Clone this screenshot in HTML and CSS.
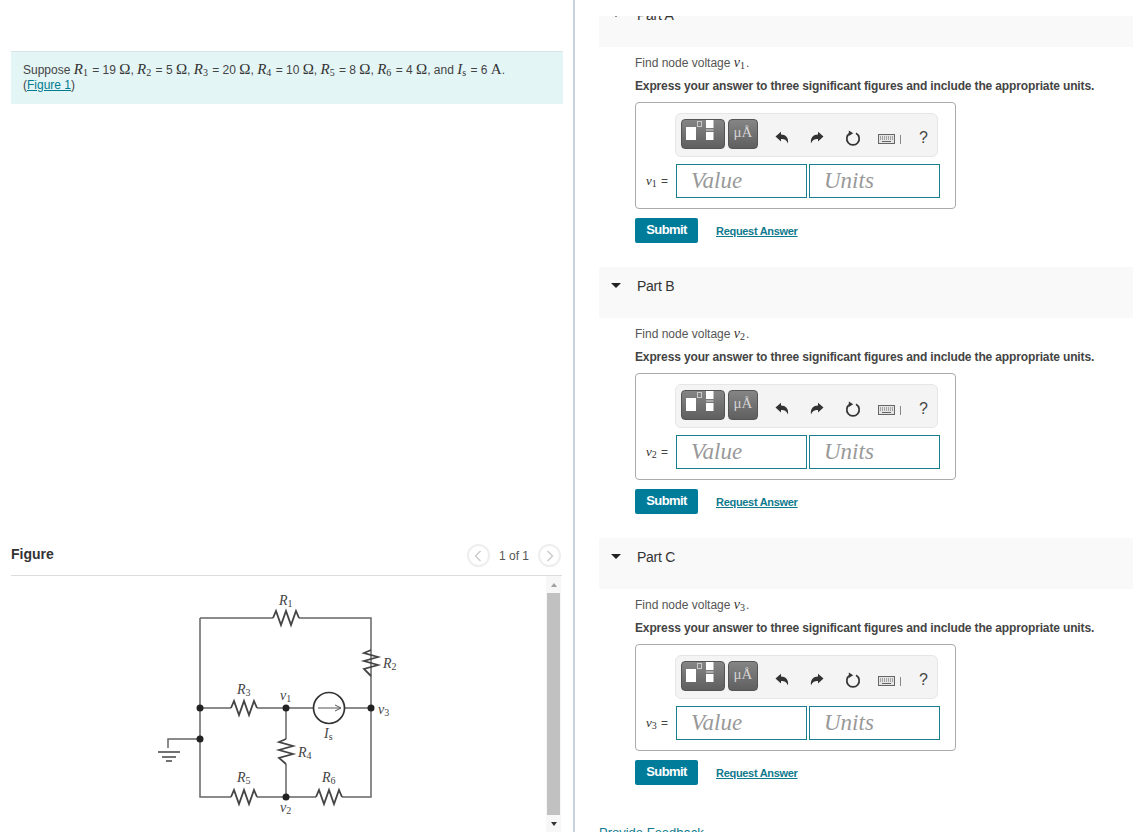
FILE: index.html
```html
<!DOCTYPE html>
<html lang="en">
<head>
<meta charset="utf-8">
<title>Node voltages</title>
<link rel="stylesheet" href="styles.css">
</head>
<body>
<svg class="defs" width="0" height="0" aria-hidden="true">
  <symbol id="i-tpl" viewBox="0 0 44 30">
    <rect x="5" y="8" width="10" height="13" fill="#fff"/>
    <rect x="16.500" y="2.500" width="4" height="5" fill="none" stroke="#c9c9c9"/>
    <rect x="25" y="1" width="7.500" height="8" fill="#fff"/>
    <rect x="25" y="10.500" width="7.500" height="1" fill="#ddd"/>
    <rect x="25" y="13" width="7.500" height="8" fill="#fff"/>
  </symbol>
  <symbol id="i-undo" viewBox="0 0 14 14">
    <path d="M0.500 5.500 L6 0.800 V3.600 C10.500 3.600 13.800 6.300 13 12.600 C11.800 9.200 9.800 8 6 8 V10.500 Z" fill="#333"/>
  </symbol>
  <symbol id="i-redo" viewBox="0 0 14 14">
    <path d="M13.500 5.500 L8 0.800 V3.600 C3.500 3.600 0.200 6.300 1 12.600 C2.200 9.200 4.200 8 8 8 V10.500 Z" fill="#333"/>
  </symbol>
  <symbol id="i-reset" viewBox="0 0 16 16">
    <path d="M5 3.300 A6.200 6.200 0 1 0 11 3.300" fill="none" stroke="#333" stroke-width="1.700"/>
    <path d="M3.800 0.500 L8.200 3.300 L3.800 6 Z" fill="#333"/>
  </symbol>
  <symbol id="i-keys" viewBox="0 0 17 10">
    <rect x="0.500" y="0.500" width="16" height="9" fill="#e4e4e4" stroke="#666"/>
    <path d="M2 3 H15 M2 5 H15" stroke="#666" stroke-dasharray="1 1"/>
    <path d="M4 7.500 H13" stroke="#666"/>
  </symbol>
</svg>
<main class="page">
  <section class="left">
    <div class="intro">
      Suppose <i class="m">R<sub>1</sub></i> = 19 <span class="u">Ω</span>, <i class="m">R<sub>2</sub></i> = 5 <span class="u">Ω</span>, <i class="m">R<sub>3</sub></i> = 20 <span class="u">Ω</span>, <i class="m">R<sub>4</sub></i> = 10 <span class="u">Ω</span>, <i class="m">R<sub>5</sub></i> = 8 <span class="u">Ω</span>, <i class="m">R<sub>6</sub></i> = 4 <span class="u">Ω</span>, and <i class="m">I<sub>s</sub></i> = 6 <span class="u">A</span>.<br>
      (<a href="#" class="link">Figure 1</a>)
    </div>
    <div class="figure">
      <header class="fig-head">
        <h2 class="fig-title">Figure</h2>
        <div class="pager">
          <span class="page-btn"><svg width="8" height="12" viewBox="0 0 8 12"><path d="M6.500 1 L1.500 6 L6.500 11" fill="none" stroke="#ccc" stroke-width="1.500"/></svg></span>
          <span class="page-num">1 of 1</span>
          <span class="page-btn"><svg width="8" height="12" viewBox="0 0 8 12"><path d="M1.500 1 L6.500 6 L1.500 11" fill="none" stroke="#ccc" stroke-width="1.500"/></svg></span>
        </div>
      </header>
      <div class="fig-body">
        <div class="fig-canvas">
          <svg class="circuit" width="280" height="252" viewBox="0 0 280 252">
            <g fill="none" stroke="#666" stroke-width="1.500">
              <path d="M60 38 V217 H91 M117 217 H176 M202 217 H231 V38 H159 M60 38 H133 M60 128 H91 M117 128 H174 M204 128 H231 M146 128 V159 M146 184 V217 M60 159 H28 V168"/>
            </g>
            <path d="M18 172 H40 M22 177 H36 M26 181 H32" fill="none" stroke="#444" stroke-width="1.500"/>
            <g fill="none" stroke="#444" stroke-width="1.800">
              <path d="M133 38 L136 31 L141 45 L146 31 L151 45 L156 31 L159 38"/>
              <path d="M231 70 L224 73 L238 77 L224 81 L238 85 L224 89 L231 96"/>
              <path d="M91 128 L94 121 L99 135 L104 121 L109 135 L114 121 L117 128"/>
              <path d="M146 159 L139 162 L153 166 L139 170 L153 174 L139 178 L146 184"/>
              <path d="M91 217 L94 210 L99 224 L104 210 L109 224 L114 210 L117 217"/>
              <path d="M176 217 L179 210 L184 224 L189 210 L194 224 L199 210 L202 217"/>
              <circle cx="189" cy="128" r="15.500" stroke="#333" stroke-width="1.700" fill="#fff"/>
            </g>
            <path d="M178 128 H200 M195 125 L201 128 L195 131" fill="none" stroke="#555"/>
            <g fill="#222">
              <circle cx="60" cy="128" r="3.500"/><circle cx="60" cy="159" r="3.500"/>
              <circle cx="146" cy="128" r="3.500"/><circle cx="231" cy="128" r="3.500"/>
              <circle cx="146" cy="217" r="3.500"/>
            </g>
            <g class="c-label">
              <text x="139" y="25">R<tspan class="c-sub" dy="2">1</tspan></text>
              <text x="243" y="88">R<tspan class="c-sub" dy="2">2</tspan></text>
              <text x="97" y="114">R<tspan class="c-sub" dy="2">3</tspan></text>
              <text x="158" y="177">R<tspan class="c-sub" dy="2">4</tspan></text>
              <text x="97" y="202">R<tspan class="c-sub" dy="2">5</tspan></text>
              <text x="182" y="202">R<tspan class="c-sub" dy="2">6</tspan></text>
              <text x="184" y="158">I<tspan class="c-sub" dy="2">s</tspan></text>
              <text x="140" y="120">v<tspan class="c-sub" dy="2">1</tspan></text>
              <text x="238" y="134">v<tspan class="c-sub" dy="2">3</tspan></text>
              <text x="140" y="232">v<tspan class="c-sub" dy="2">2</tspan></text>
            </g>
          </svg>
        </div>
        <div class="scrollbar">
          <span class="arrow-up"></span>
          <span class="thumb"></span>
          <span class="arrow-down"></span>
        </div>
      </div>
    </div>
  </section>
  <section class="right">
    <div class="clip">
      <div class="parts">
        <article class="part">
          <header class="part-head"><span class="caret"></span>Part A</header>
          <p class="q">Find node voltage <i class="m">v<sub>1</sub></i>.</p>
          <p class="hint">Express your answer to three significant figures and include the appropriate units.</p>
          <div class="answer">
            <div class="toolbar">
              <span class="tb tb-wide"><svg width="44" height="30"><use href="#i-tpl"/></svg></span>
              <span class="tb tb-unit">μÅ</span>
              <svg class="ic ic-undo" width="14" height="14"><use href="#i-undo"/></svg>
              <svg class="ic ic-redo" width="14" height="14"><use href="#i-redo"/></svg>
              <svg class="ic ic-reset" width="16" height="16"><use href="#i-reset"/></svg>
              <svg class="ic ic-keys" width="17" height="10"><use href="#i-keys"/></svg>
              <span class="tb-sep"></span>
              <span class="tb-help">?</span>
            </div>
            <div class="inputs">
              <span class="var"><i class="m">v<sub>1</sub></i> =</span>
              <span class="field">Value</span>
              <span class="field">Units</span>
            </div>
          </div>
          <div class="actions"><button class="submit">Submit</button><a href="#" class="request">Request Answer</a></div>
        </article>
        <article class="part">
          <header class="part-head"><span class="caret"></span>Part B</header>
          <p class="q">Find node voltage <i class="m">v<sub>2</sub></i>.</p>
          <p class="hint">Express your answer to three significant figures and include the appropriate units.</p>
          <div class="answer">
            <div class="toolbar">
              <span class="tb tb-wide"><svg width="44" height="30"><use href="#i-tpl"/></svg></span>
              <span class="tb tb-unit">μÅ</span>
              <svg class="ic ic-undo" width="14" height="14"><use href="#i-undo"/></svg>
              <svg class="ic ic-redo" width="14" height="14"><use href="#i-redo"/></svg>
              <svg class="ic ic-reset" width="16" height="16"><use href="#i-reset"/></svg>
              <svg class="ic ic-keys" width="17" height="10"><use href="#i-keys"/></svg>
              <span class="tb-sep"></span>
              <span class="tb-help">?</span>
            </div>
            <div class="inputs">
              <span class="var"><i class="m">v<sub>2</sub></i> =</span>
              <span class="field">Value</span>
              <span class="field">Units</span>
            </div>
          </div>
          <div class="actions"><button class="submit">Submit</button><a href="#" class="request">Request Answer</a></div>
        </article>
        <article class="part">
          <header class="part-head"><span class="caret"></span>Part C</header>
          <p class="q">Find node voltage <i class="m">v<sub>3</sub></i>.</p>
          <p class="hint">Express your answer to three significant figures and include the appropriate units.</p>
          <div class="answer">
            <div class="toolbar">
              <span class="tb tb-wide"><svg width="44" height="30"><use href="#i-tpl"/></svg></span>
              <span class="tb tb-unit">μÅ</span>
              <svg class="ic ic-undo" width="14" height="14"><use href="#i-undo"/></svg>
              <svg class="ic ic-redo" width="14" height="14"><use href="#i-redo"/></svg>
              <svg class="ic ic-reset" width="16" height="16"><use href="#i-reset"/></svg>
              <svg class="ic ic-keys" width="17" height="10"><use href="#i-keys"/></svg>
              <span class="tb-sep"></span>
              <span class="tb-help">?</span>
            </div>
            <div class="inputs">
              <span class="var"><i class="m">v<sub>3</sub></i> =</span>
              <span class="field">Value</span>
              <span class="field">Units</span>
            </div>
          </div>
          <div class="actions"><button class="submit">Submit</button><a href="#" class="request">Request Answer</a></div>
        </article>
        <a href="#" class="feedback">Provide Feedback</a>
      </div>
    </div>
  </section>
</main>
</body>
</html>
```
FILE: styles.css
```css
* { box-sizing: border-box; }
html, body { margin: 0; padding: 0; background: #fff; }
body { font: 12px/14px "Liberation Sans", Arial, sans-serif; color: #333; overflow: hidden; }
.defs { position: absolute; }
.page { display: flex; width: 1133px; height: 832px; overflow: hidden; }

.left {
  width: 575px; height: 832px; flex: none;
  padding: 51px 10px 0 11px;
  border-right: 2px solid #c9d3df;
  display: flex; flex-direction: column;
}
.intro {
  height: 53px; padding: 10px 12px 0;
  background: #e4f5f6; border-top: 1px solid #d8e4e8;
  color: #444; line-height: 15px;
}
.m { font-family: "Liberation Serif", serif; font-style: italic; font-size: 15px; line-height: 1; color: #333; margin-right: 1px; }
.m sub { font-style: normal; font-size: 10px; line-height: 0; vertical-align: -2px; }
.u { font-family: "Liberation Serif", serif; font-size: 15px; line-height: 1; color: #333; }
.link { color: #007c91; text-decoration: underline; }

.figure { margin-top: auto; height: 293px; margin-right: 1px; display: flex; flex-direction: column; }
.fig-head {
  flex: none; height: 37px;
  display: flex; align-items: center; justify-content: space-between;
  border-bottom: 1px solid #ddd;
  padding-bottom: 6px;
}
.fig-title { margin: 0; font-size: 14px; font-weight: bold; color: #333; }
.pager { display: flex; align-items: center; gap: 9px; padding-top: 3px; margin-right: 1px; }
.page-btn {
  width: 23px; height: 23px; border: 2px solid #eee; border-radius: 50%;
  display: flex; align-items: center; justify-content: center;
}
.page-num { color: #555; }
.fig-body { flex: 1; display: flex; min-height: 0; }
.fig-canvas { flex: 1; padding: 4px 0 0 129px; overflow: hidden; }
.circuit { display: block; }
.c-label { font: italic 14px "Liberation Serif", serif; fill: #444; }
.c-sub { font-size: 10px; font-style: normal; }
.scrollbar {
  width: 15px; flex: none; margin-right: 1px; background: #f7f7f7;
  display: flex; flex-direction: column; align-items: center;
}
.thumb { width: 13px; height: 222px; background: #c1c1c1; }
.arrow-up, .arrow-down { width: 0; height: 0; border-left: 3.5px solid transparent; border-right: 3.5px solid transparent; }
.arrow-up { border-bottom: 4px solid #a0a0a0; margin: 7px 0 6px; }
.arrow-down { border-top: 4px solid #333; margin-top: 7px; }

.right { flex: 1; min-width: 0; height: 832px; padding: 16px 0 0 24px; }
.clip { height: 816px; overflow: hidden; }
.parts { margin-top: -20px; }
.part { height: 271px; }
.part-head {
  height: 51px; background: #f9f9f9;
  display: flex; align-items: center;
  padding: 0 0 14px 12px;
  font-size: 14px; letter-spacing: -0.25px; color: #333;
}
.caret {
  width: 0; height: 0; margin-right: 16px;
  border-left: 5px solid transparent; border-right: 5px solid transparent;
  border-top: 5px solid #222;
}
.q, .hint { margin: 0 0 0 36px; height: 23px; line-height: 14px; }
.q { margin-top: 9px; color: #555; }
.hint { height: 16px; font-weight: bold; color: #444; letter-spacing: -0.14px; }
.q .m { font-size: 14px; }
.answer {
  width: 321px; height: 107px; margin: 7px 0 0 36px;
  border: 1px solid #aaa; border-radius: 4px;
  padding: 10px 0 0 10px;
}
.toolbar {
  width: 263px; height: 44px; margin-left: 29px;
  background: #f4f4f4; border: 1px solid #e6e6e6; border-radius: 6px;
  display: flex; align-items: center; padding-left: 5px;
}
.tb {
  height: 30px; margin-top: -3px; border-radius: 4px; border: 1px solid #555;
  background: linear-gradient(#858585, #5f5f5f);
  display: flex; align-items: center; justify-content: center;
}
.tb-wide { width: 44px; }
.tb-wide svg { display: block; flex: none; }
.tb-unit { width: 30px; margin-left: 3px; color: #d4d4d4; font: 15px "Liberation Serif", serif; padding-bottom: 3px; }
.ic { flex: none; display: block; }
.ic-undo { margin: 5px 0 0 17px; }
.ic-redo { margin: 5px 0 0 21px; }
.ic-reset { margin: 6px 0 0 21px; }
.ic-keys { margin: 8px 0 0 17px; }
.tb-sep { width: 1px; height: 9px; background: #888; margin: 8px 0 0 5px; }
.tb-help { margin: 5px 0 0 18px; font-size: 16px; color: #444; }
.inputs { display: flex; align-items: center; margin-top: 7px; }
.var { width: 30px; color: #444; white-space: nowrap; }
.var .m { font-size: 13px; }
.field {
  width: 131px; height: 34px; margin-right: 2px;
  border: 1px solid #1a7d90; background: #fff;
  padding-left: 14px;
  font: italic 23px/32px "Liberation Serif", serif; color: #999;
}
.actions { display: flex; align-items: center; margin: 9px 0 0 36px; }
.submit {
  width: 63px; height: 25px; padding: 0 0 2px; border: 0; border-radius: 2px;
  background: #007c9b; color: #fff;
  font: bold 13px "Liberation Sans", Arial, sans-serif; letter-spacing: -0.6px;
}
.request { margin: 0 0 0 18px; color: #0f7a8e; font-weight: bold; font-size: 11px; letter-spacing: -0.3px; text-decoration: underline; }
.feedback { display: block; margin-top: 17px; color: #0f7a8e; font-size: 13px; }
```
